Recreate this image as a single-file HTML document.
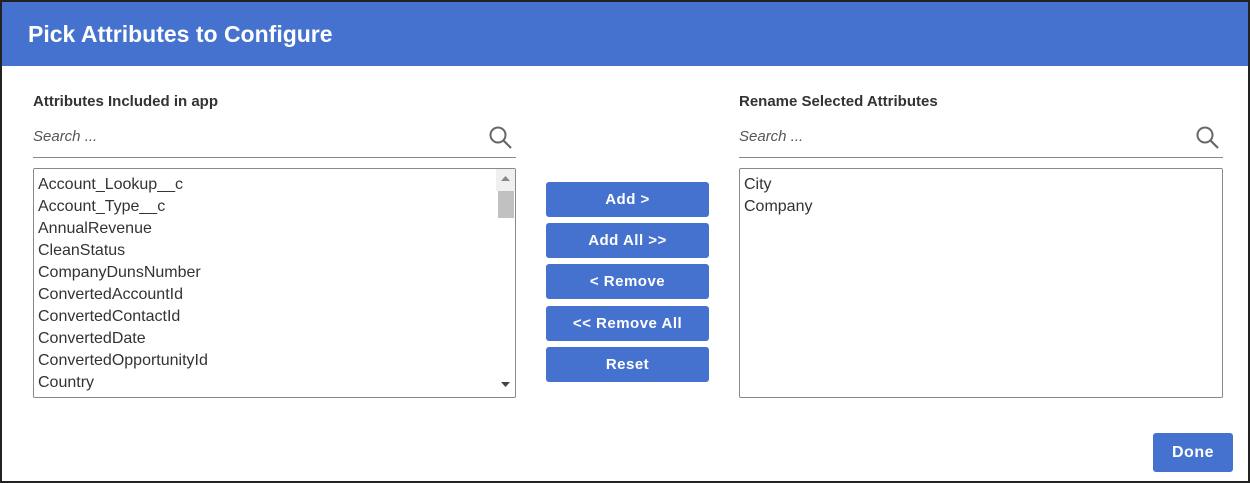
<!DOCTYPE html>
<html><head><style>
*{box-sizing:border-box;margin:0;padding:0}
body{width:1250px;height:483px;background:#fff;font-family:"Liberation Sans",sans-serif;position:relative;overflow:hidden}
.frame{position:absolute;left:0;top:0;width:1250px;height:483px;border:2px solid #222;border-top-width:2px}
.hdr{position:absolute;left:2px;top:2px;width:1246px;height:64px;background:#4672cf;color:#fff;font-size:23px;font-weight:bold;padding:19px 0 0 26px}
.lbl{position:absolute;font-size:15px;font-weight:bold;color:#333}
.search{position:absolute;font-size:15px;font-style:italic;color:#555}
.line{position:absolute;height:1px;background:#888}
.box{position:absolute;border:1px solid #888;border-radius:2px;font-size:16px;color:#333}
.box div{height:22px;line-height:22px}
.sb{position:absolute;right:0;top:0;width:19px;height:100%;background:#f0f0f0}
.btn{position:absolute;left:546px;width:163px;height:35px;background:#4672cf;border-radius:3px;color:#fff;font-size:15px;font-weight:bold;text-align:center;line-height:35px;letter-spacing:.5px}
svg{position:absolute}
</style></head><body>
<div class="frame"></div>
<div class="hdr">Pick Attributes to Configure</div>
<div class="lbl" style="left:33px;top:93px">Attributes Included in app</div>
<div class="lbl" style="left:739px;top:93px">Rename Selected Attributes</div>
<div class="search" style="left:33px;top:128px">Search ...</div>
<div class="search" style="left:739px;top:128px">Search ...</div>
<svg style="left:488px;top:125px" width="26" height="26" viewBox="0 0 26 26"><circle cx="10" cy="10" r="7.5" fill="none" stroke="#666" stroke-width="2"/><path d="M15.5 15.5L23 23" stroke="#666" stroke-width="2.2"/></svg>
<svg style="left:1195px;top:125px" width="26" height="26" viewBox="0 0 26 26"><circle cx="10" cy="10" r="7.5" fill="none" stroke="#666" stroke-width="2"/><path d="M15.5 15.5L23 23" stroke="#666" stroke-width="2.2"/></svg>
<div class="line" style="left:33px;top:157px;width:483px"></div>
<div class="line" style="left:739px;top:157px;width:484px"></div>
<div class="box" style="left:33px;top:168px;width:483px;height:230px;padding:5px 0 0 4px">
<div>Account_Lookup__c</div><div>Account_Type__c</div><div>AnnualRevenue</div><div>CleanStatus</div><div>CompanyDunsNumber</div><div>ConvertedAccountId</div><div>ConvertedContactId</div><div>ConvertedDate</div><div>ConvertedOpportunityId</div><div>Country</div>
<div class="sb"><svg style="left:5px;top:7px" width="9" height="6"><path d="M0 5L4.5 0L9 5Z" fill="#888"/></svg><div style="position:absolute;left:2px;top:22px;width:16px;height:27px;background:#c1c1c1"></div><svg style="left:5px;top:213px" width="9" height="6"><path d="M0 0L4.5 5L9 0Z" fill="#444"/></svg></div>
</div>
<div class="box" style="left:739px;top:168px;width:484px;height:230px;padding:5px 0 0 4px"><div>City</div><div>Company</div></div>
<div class="btn" style="top:182px">Add &gt;</div>
<div class="btn" style="top:223px">Add All &gt;&gt;</div>
<div class="btn" style="top:264px">&lt; Remove</div>
<div class="btn" style="top:306px">&lt;&lt; Remove All</div>
<div class="btn" style="top:347px">Reset</div>
<div class="btn" style="left:1153px;top:433px;width:80px;height:39px;line-height:39px;font-size:16px">Done</div>
</body></html>
